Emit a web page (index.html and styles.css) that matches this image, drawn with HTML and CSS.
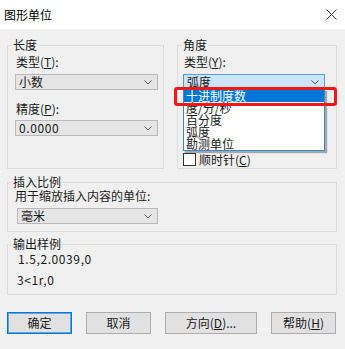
FILE: index.html
```html
<!DOCTYPE html>
<html lang="zh-CN">
<head>
    <meta charset="UTF-8">
    <title>图形单位</title>
    <link rel="stylesheet" href="styles.css">
</head>
<body>
    <div class="dialog">
        <div class="titlebar">
            <span class="title">图形单位</span>
            <svg class="close" width="11" height="11" viewBox="0 0 11 11">
                <path d="M0.5 0.5 L10.5 10.5 M10.5 0.5 L0.5 10.5" stroke="#333" stroke-width="1" fill="none"/>
            </svg>
        </div>

        <div class="content">
            <div class="row">
                <fieldset class="group group-length">
                    <legend>长度</legend>
                    <div class="label">类型(<u>T</u>):</div>
                    <div class="combo">
                        <span>小数</span>
                        <svg class="chevron" width="8" height="5" viewBox="0 0 8 5"><path d="M0.5 0.5 L4 4 L7.5 0.5" stroke="#555" fill="none"/></svg>
                    </div>
                    <div class="label label-gap">精度(<u>P</u>):</div>
                    <div class="combo combo-low">
                        <span class="num">0.0000</span>
                        <svg class="chevron" width="8" height="5" viewBox="0 0 8 5"><path d="M0.5 0.5 L4 4 L7.5 0.5" stroke="#555" fill="none"/></svg>
                    </div>
                </fieldset>

                <fieldset class="group group-angle">
                    <legend>角度</legend>
                    <div class="label">类型(<u>Y</u>):</div>
                    <div class="combo-wrap">
                        <div class="combo combo-open">
                            <span>弧度</span>
                            <svg class="chevron" width="8" height="5" viewBox="0 0 8 5"><path d="M0.5 0.5 L4 4 L7.5 0.5" stroke="#555" fill="none"/></svg>
                        </div>
                        <ul class="dropdown">
                            <li class="selected">十进制度数</li>
                            <li>度/分/秒</li>
                            <li>百分度</li>
                            <li>弧度</li>
                            <li>勘测单位</li>
                        </ul>
                    </div>
                    <!--精度 fica escondido atrás da lista aberta -->
                    <div class="check">
                        <span class="box"></span>
                        <span>顺时针(<u>C</u>)</span>
                    </div>
                </fieldset>
            </div>

            <fieldset class="group group-insert">
                <legend>插入比例</legend>
                <div class="label">用于缩放插入内容的单位:</div>
                <div class="combo combo-unit">
                    <span>毫米</span>
                    <svg class="chevron" width="8" height="5" viewBox="0 0 8 5"><path d="M0.5 0.5 L4 4 L7.5 0.5" stroke="#555" fill="none"/></svg>
                </div>
            </fieldset>

            <fieldset class="group group-output">
                <legend>输出样例</legend>
                <div class="sample num">1.5,2.0039,0</div>
                <div class="sample sample-second num">3&lt;1r,0</div>
            </fieldset>

            <div class="buttons">
                <button class="btn btn-default">确定</button>
                <button class="btn">取消</button>
                <button class="btn btn-wide">方向(<u>D</u>)...</button>
                <button class="btn">帮助(<u>H</u>)</button>
            </div>
        </div>

        <!-- marcação vermelha da captura -->
        <div class="mark"></div>
    </div>
</body>
</html>
```

FILE: styles.css
```css
body {
    margin: 0;
    background: #f0f0f0;
    font-family: "Noto Sans CJK SC", sans-serif;
    font-size: 12px;
    color: #1a1a1a;
}

.dialog {
    position: relative;
    width: 345px;
    height: 349px;
    background: #f0f0f0;
    overflow: hidden;
}

.titlebar {
    height: 29px;
    background: white;
    display: flex;
    align-items: center;
    justify-content: space-between;
    padding: 0 8px 0 4px;
}

.title {
    font-size: 12px;
    color: #000;
    line-height: 12px;
}

.close {
    margin-top: -1px;
}

.content {
    padding: 10px 8px 0 7px;
}

.row {
    display: flex;
    gap: 13px;
}

.group {
    margin: 0;
    min-width: 0;
    box-sizing: border-box;
    border: 1px solid #dcdcdc;
    padding: 0 5px 0 7px;
}

.group legend {
    padding: 0 1px;
    margin-left: -3px;
    line-height: 12px;
    height: 12px;
}

.label {
    line-height: 12px;
    padding-left: 1px;
}

.label-gap {
    margin-top: 13px;
}

u {
    text-decoration: underline;
    text-underline-offset: 1px;
}

.group-length {
    width: 157px;
    padding-top: 5px;
}

.group-angle {
    width: 160px;
    padding: 5px 11px 2px 5px;
}

.group-angle legend {
    margin-left: -1px;
}

.combo {
    height: 16px;
    box-sizing: border-box;
    margin-top: 6px;
    border: 1px solid #b9b9b9;
    background: #e5e5e5;
    display: flex;
    align-items: center;
    justify-content: space-between;
    padding: 0 5px 0 3px;
    line-height: 12px;
}

.combo-low {
    margin-top: 5px;
}

.combo-wrap {
    position: relative;
}

.combo-open {
    background: #cce4f7;
    border-color: #569de5;
}

.dropdown {
    position: absolute;
    left: 0;
    right: 0;
    top: 100%;
    margin: -1px 0 0 0;
    padding: 0;
    list-style: none;
    background: white;
    border: 1px solid #3b87c9;
    box-shadow: 2px 2px 1px rgba(0, 0, 0, 0.3);
    z-index: 2;
}

.dropdown li {
    line-height: 12px;
    height: 12px;
    padding-left: 2px;
}

.dropdown .selected {
    background: #0078d7;
    color: white;
}

.check {
    display: flex;
    align-items: center;
    gap: 3px;
    margin-top: 63px;
    line-height: 12px;
    height: 13px;
}

.box {
    width: 13px;
    height: 13px;
    box-sizing: border-box;
    border: 1px solid #333;
    background: white;
}

.group-insert {
    margin-top: 7px;
    padding: 2px 5px 7px 7px;
}

.group-insert .label {
    padding-left: 0;
}

.combo-unit {
    width: 141px;
    margin-left: 2px;
}

.group-output {
    margin-top: 6px;
    padding: 3px 5px 8px 7px;
}

.sample {
    line-height: 12px;
    padding-left: 3px;
}

.sample-second {
    margin-top: 9px;
    padding-left: 2px;
}

.num {
    letter-spacing: 0.6px;
}

.buttons {
    display: flex;
    justify-content: space-between;
    margin-top: 17px;
    margin-right: 1px;
}

.btn {
    width: 65px;
    height: 22px;
    margin: 0;
    padding: 0;
    border: 1px solid #adadad;
    background: #e1e1e1;
    font-family: inherit;
    font-size: 12px;
    color: #1a1a1a;
    line-height: 12px;
}

.btn-default {
    border-color: #0078d7;
    box-shadow: inset 0 0 0 1px #5fa5e0;
}

.btn-wide {
    width: 92px;
}

.mark {
    position: absolute;
    left: 174px;
    top: 87px;
    width: 163px;
    height: 19px;
    box-sizing: border-box;
    border: 3px solid #f01818;
    border-radius: 3px;
    z-index: 3;
}
```
